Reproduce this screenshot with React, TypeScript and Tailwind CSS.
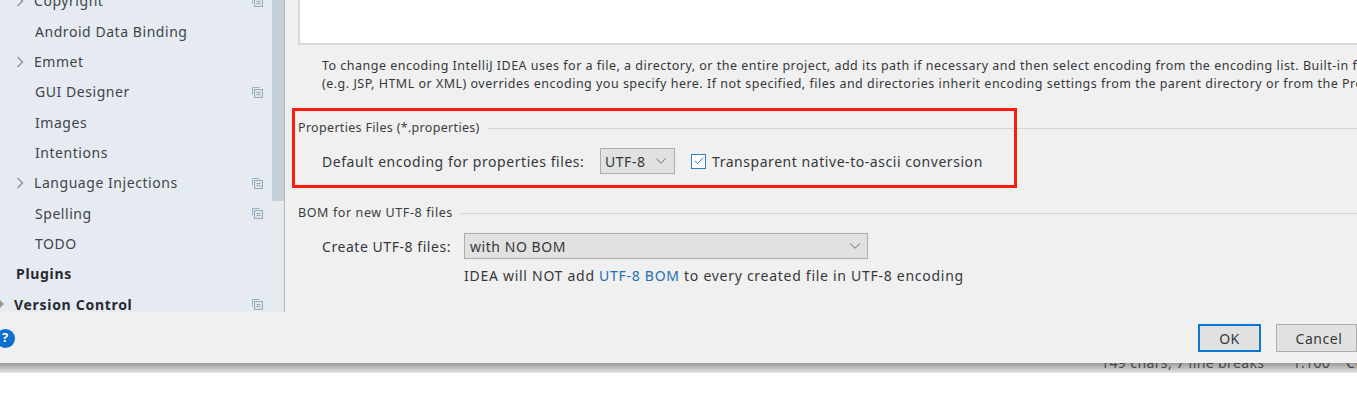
import { ChevronDown, Check } from "lucide-react";

const items = [
  { label: "Copyright", arrow: true, copy: true },
  { label: "Android Data Binding" },
  { label: "Emmet", arrow: true },
  { label: "GUI Designer", copy: true },
  { label: "Images" },
  { label: "Intentions" },
  { label: "Language Injections", arrow: true, copy: true },
  { label: "Spelling", copy: true },
  { label: "TODO" },
];

const CopyIcon = () => (
  <svg width="12" height="12" viewBox="0 0 12 12" fill="none" className="shrink-0">
    <path d="M8.5 1.5h-7v7" stroke="#8fb4cc" strokeWidth="1" />
    <rect x="3.5" y="3.5" width="8" height="8" fill="#dfe5ea" stroke="#9aa9b3" />
    <path d="M5.5 6.5h4M5.5 8.5h4" stroke="#9aa9b3" />
  </svg>
);

const Arrow = () => (
  <svg width="8" height="12" viewBox="0 0 8 12" fill="none">
    <path d="M1.5 1l5 5-5 5" stroke="#8b8f93" strokeWidth="1.3" />
  </svg>
);

const Sidebar = () => (
  <aside className="w-[285px] shrink-0 bg-[#e6ebf2] border-r border-[#b4b8bc] flex overflow-hidden">
    <ul className="flex-1 -mt-[14.3px] text-[14px] tracking-[0.55px] text-[#3f444a]">
      {items.map((it) => (
        <li key={it.label} className="h-[30.33px] flex items-center pr-[9px]">
          <span className="w-[35px] pl-[16px] shrink-0">{it.arrow && <Arrow />}</span>
          <span className={it.arrow ? "-ml-px flex-1" : "flex-1"}>{it.label}</span>
          {it.copy && <CopyIcon />}
        </li>
      ))}
      <li className="h-[30.33px] flex items-center pl-[16px] font-bold tracking-[0.7px] text-[#262a30]">Plugins</li>
      <li className="h-[30.33px] flex items-center pr-[9px] font-bold tracking-[0.7px] text-[#262a30]">
        <svg width="4" height="8" viewBox="0 0 4 8" className="mr-[10px]">
          <path d="M0 0l4 4-4 4z" fill="#9a9a9a" />
        </svg>
        <span className="flex-1">Version Control</span>
        <CopyIcon />
      </li>
    </ul>
    <div className="w-[12px] bg-[#c6ced6] h-[201px] shrink-0" />
  </aside>
);

const GroupTitle = ({ title, wide }: { title: string; wide?: boolean }) => (
  <div className={`flex items-center gap-[7px] text-[12.5px] text-[#3a3d40] h-[18px] ${wide ? "tracking-[0.6px]" : "tracking-[0.32px]"}`}>
    <span>{title}</span>
    <div className="flex-1 h-px bg-[#d5d5d5]" />
  </div>
);

export default function App() {
  return (
    <div
      className="w-[1357px] h-[415px] overflow-hidden relative bg-white"
      style={{ fontFamily: '"Noto Sans", "Open Sans", sans-serif' }}
    >
      <div className="absolute left-0 right-0 top-[363px] h-[10px] bg-gradient-to-b from-[#9c9c9c] to-[#e4e4e4] overflow-hidden">
        <div className="absolute left-[1101px] -top-[11px] flex text-[14px] tracking-[0.4px] text-[#44474a] whitespace-nowrap">
          <span>149 chars, 7 line breaks</span>
          <span className="ml-[28px]">1:100</span>
          <span className="ml-[16px]">CRLF</span>
        </div>
      </div>
      <div className="h-[363px] flex flex-col bg-[#f0f0f0] relative">
        <div className="h-[312px] flex overflow-hidden">
          <Sidebar />
          <main className="flex-1 min-w-0 pl-[13px] overflow-hidden">
            <div className="h-[45px] bg-white border-l-2 border-b-2 border-[#d8d8d8]" />
            <div className="pl-[24px] pt-[12px] text-[12.5px] tracking-[0.49px] leading-[18px] text-[#35383b] whitespace-nowrap">
              <p>
                To change encoding IntelliJ IDEA uses for a file, a directory, or the entire project, add its path if necessary and then select encoding from the encoding list. Built-in file encoding
              </p>
              <p>
                (e.g. JSP, HTML or XML) overrides encoding you specify here. If not specified, files and directories inherit encoding settings from the parent directory or from the Project Encoding
              </p>
            </div>
            <div className="mt-[26px]">
              <GroupTitle title="Properties Files (*.properties)" />
              <div className="pl-[24px] mt-[11px] flex items-center text-[14px] tracking-[0.55px] text-[#35383b]">
                <span className="w-[278px] whitespace-nowrap">Default encoding for properties files:</span>
                <div className="w-[75px] h-[26px] bg-[#e1e1e1] border border-[#adadad] flex items-center pl-[4px] pr-[4px] justify-between">
                  <span>UTF-8</span>
                  <ChevronDown size={18} strokeWidth={1.1} className="text-[#555]" />
                </div>
                <span className="ml-[16px] w-[15px] h-[15px] border border-[#2f7fc4] bg-white flex items-center justify-center">
                  <Check size={12} strokeWidth={2} className="text-[#2f7fc4]" />
                </span>
                <span className="ml-[6px] whitespace-nowrap">Transparent native-to-ascii conversion</span>
              </div>
            </div>
            <div className="mt-[30px]">
              <GroupTitle title="BOM for new UTF-8 files" wide />
              <div className="pl-[24px] mt-[11px] flex items-center text-[14px] tracking-[0.55px] text-[#35383b]">
                <span className="w-[142px] whitespace-nowrap">Create UTF-8 files:</span>
                <div className="w-[404px] h-[26px] bg-[#e1e1e1] border border-[#adadad] flex items-center pl-[5px] pr-[3px] justify-between">
                  <span>with NO BOM</span>
                  <ChevronDown size={18} strokeWidth={1.1} className="text-[#555]" />
                </div>
              </div>
              <p className="pl-[166px] mt-[6px] text-[14px] tracking-[0.72px] text-[#35383b]">
                IDEA will NOT add <span className="text-[#2470b3]">UTF-8 BOM</span> to every created file in UTF-8 encoding
              </p>
            </div>
          </main>
        </div>
        <footer className="flex-1 flex items-center justify-between">
          <span className="-ml-[4.5px] mt-[1px] w-[19px] h-[19px] rounded-full bg-[#0f6fd0] text-white text-[13px] font-bold flex items-center justify-center">
            ?
          </span>
          <div className="flex gap-[15px] text-[14px] tracking-[0.55px] text-[#35383b] mt-[1px]">
            <button className="w-[63px] h-[28px] bg-[#e1e1e1] border-2 border-[#0a78d7]">OK</button>
            <button className="w-[81px] h-[28px] bg-[#e1e1e1] border border-[#adadad] pl-[5px]">Cancel</button>
          </div>
        </footer>
      </div>
      <div className="absolute left-[292px] top-[108px] w-[725px] h-[80px] border-[3px] border-[#fb1d0c]" />
    </div>
  );
}
